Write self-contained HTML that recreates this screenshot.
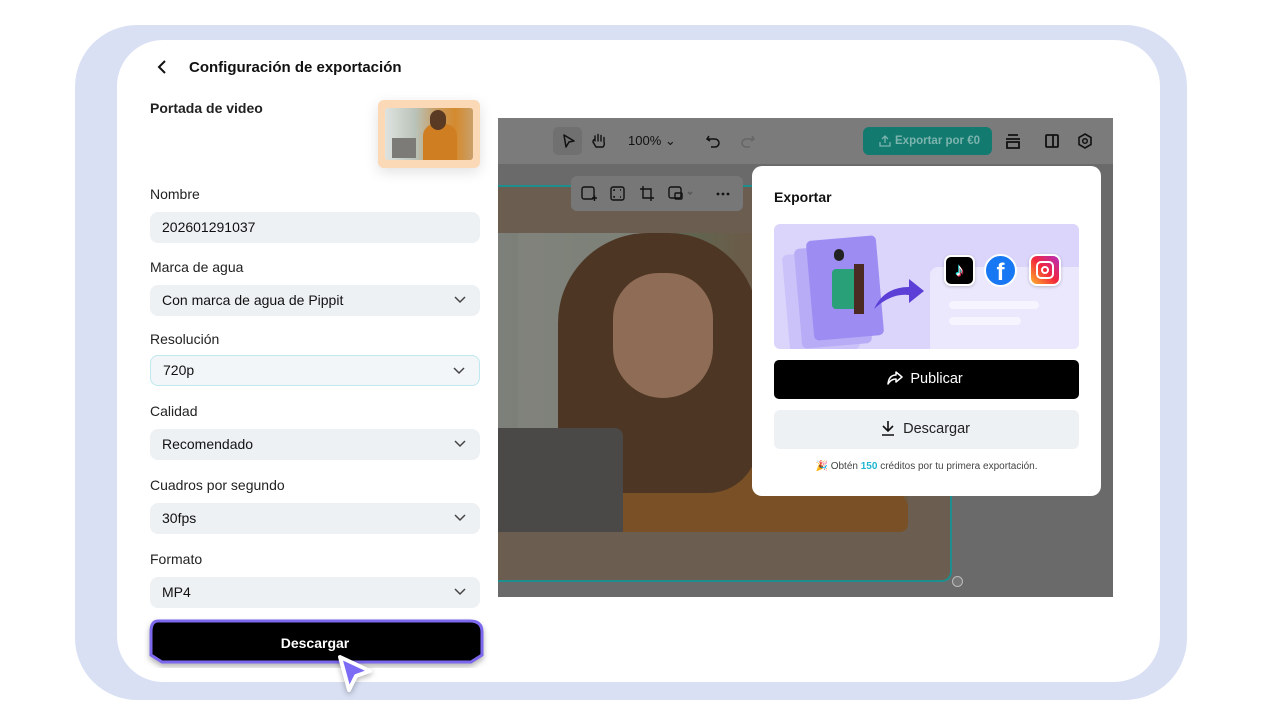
<!DOCTYPE html>
<html><head><meta charset="utf-8"><style>
*{box-sizing:border-box;margin:0;padding:0}
body{width:1280px;height:720px;background:#fff;font-family:"Liberation Sans",sans-serif;position:relative;overflow:hidden;color:#111}
.abs{position:absolute}
.outer{left:75px;top:25px;width:1112px;height:675px;background:#d9e0f4;border-radius:62px}
.inner{left:117px;top:40px;width:1043px;height:642px;background:#fff;border-radius:46px}
.lbl{position:absolute;left:150px;font-size:14px;color:#222}
.fld{position:absolute;left:150px;width:330px;height:31px;background:#eef1f4;border-radius:8px;font-size:14px;padding-left:12px;line-height:31px;color:#111}
.fld svg{position:absolute;right:14px;top:11px}
</style></head><body>
<div class="abs outer"></div>
<div class="abs inner"></div>

<svg class="abs" style="left:156px;top:59px" width="14" height="16"><path d="M9 2 L3 8 L9 14" stroke="#111" stroke-width="2" fill="none"/></svg>
<div class="abs" style="left:189px;top:59px;font-size:15px;font-weight:bold">Configuración de exportación</div>
<div class="abs" style="left:150px;top:100px;font-size:14px;font-weight:bold;color:#222">Portada de video</div>
<div class="abs" style="left:378px;top:100px;width:102px;height:68px;background:#fbd9b6;border-radius:6px;box-shadow:0 4px 14px rgba(0,0,0,.12);overflow:hidden">
 <div class="abs" style="left:7px;top:8px;width:88px;height:52px;border-radius:3px;background:linear-gradient(90deg,#dfe3e0 0%,#b9c2b8 35%,#c99a5c 60%,#d48a2e 80%,#c9a06a 100%)"></div>
 <div class="abs" style="left:45px;top:24px;width:34px;height:36px;background:#cf7e22;border-radius:12px 12px 0 0"></div>
 <div class="abs" style="left:52px;top:10px;width:16px;height:20px;background:#5a3a22;border-radius:8px"></div>
 <div class="abs" style="left:14px;top:38px;width:24px;height:20px;background:#7d7b78"></div>
</div>

<div class="lbl" style="top:186px">Nombre</div>
<div class="fld" style="top:212px">202601291037</div>
<div class="lbl" style="top:259px">Marca de agua</div>
<div class="fld" style="top:285px">Con marca de agua de Pippit<svg width="12" height="8"><path d="M1 1l5 5 5-5" stroke="#444" stroke-width="1.5" fill="none"/></svg></div>
<div class="lbl" style="top:331px">Resolución</div>
<div class="fld" style="top:355px;background:#f2f6f8;border:1px solid #bfe8ef;line-height:29px">720p<svg width="12" height="8"><path d="M1 1l5 5 5-5" stroke="#444" stroke-width="1.5" fill="none"/></svg></div>
<div class="lbl" style="top:403px">Calidad</div>
<div class="fld" style="top:429px">Recomendado<svg width="12" height="8"><path d="M1 1l5 5 5-5" stroke="#444" stroke-width="1.5" fill="none"/></svg></div>
<div class="lbl" style="top:477px">Cuadros por segundo</div>
<div class="fld" style="top:503px">30fps<svg width="12" height="8"><path d="M1 1l5 5 5-5" stroke="#444" stroke-width="1.5" fill="none"/></svg></div>
<div class="lbl" style="top:551px">Formato</div>
<div class="fld" style="top:577px">MP4<svg width="12" height="8"><path d="M1 1l5 5 5-5" stroke="#444" stroke-width="1.5" fill="none"/></svg></div>

<svg class="abs" style="left:144px;top:618px" width="346" height="50"><path d="M14 3 H326 Q338 3 338 14 V37 L327 44 H18 L7 37 V14 Q7 3 14 3 Z" fill="#000" stroke="#7b68ee" stroke-width="3" filter="drop-shadow(0 3px 3px rgba(0,0,0,.3))"/></svg>
<div class="abs" style="left:150px;top:635px;width:330px;text-align:center;color:#fff;font-size:14px;font-weight:bold">Descargar</div>
<svg class="abs" style="left:330px;top:650px" width="50" height="50"><path d="M10 7 L40 21 L26 26 L19 40 Z" fill="#7c6cf5" stroke="#fff" stroke-width="4" stroke-linejoin="round" filter="drop-shadow(0 2px 3px rgba(0,0,0,.3))"/></svg>

<!-- canvas -->
<div class="abs" style="left:498px;top:118px;width:615px;height:479px;background:#6a6a6a"></div>
<div class="abs" style="left:498px;top:118px;width:615px;height:46px;background:#7b7b7b"></div>
<div class="abs" style="left:498px;top:185px;width:454px;height:397px;background:#6b5e51;border-top:2px solid #1e8e8e;border-bottom:2px solid #1e8e8e;border-right:2px solid #1e8e8e;border-radius:0 0 10px 0"></div>
<div class="abs" style="left:498px;top:233px;width:410px;height:299px;border-radius:0 0 8px 0;overflow:hidden;background:linear-gradient(90deg,#7d807a 0%,#737a6c 30%,#5f6652 45%,#6a5c48 60%,#6d5a42 100%)">
 <div class="abs" style="left:20px;top:0;width:130px;height:200px;background:#84867f;opacity:.6"></div>
 <div class="abs" style="left:60px;top:150px;width:90px;height:130px;background:#4e5a40;border-radius:50%;opacity:.7"></div>
 <div class="abs" style="left:60px;top:200px;width:360px;height:160px;background:#7a5126;border-radius:90px 120px 0 0"></div>
 <div class="abs" style="left:60px;top:0px;width:200px;height:260px;background:#4d3624;border-radius:90px 90px 50px 50px"></div>
 <div class="abs" style="left:115px;top:40px;width:100px;height:125px;background:#8e6c55;border-radius:50px 50px 55px 55px"></div>
 <div class="abs" style="left:0;top:195px;width:125px;height:104px;background:#4a4947;border-radius:0 8px 0 0"></div>
</div>
<div class="abs" style="left:952px;top:576px;width:11px;height:11px;border-radius:50%;background:#777;border:1px solid #bbb"></div>

<!-- top toolbar -->
<div class="abs" style="left:553px;top:127px;width:29px;height:28px;background:#707070;border-radius:5px"></div>
<svg class="abs" style="left:561px;top:133px" width="16" height="16"><path d="M3 2 L13 8 L8 9 L5 14 Z" fill="none" stroke="#111" stroke-width="1.5" stroke-linejoin="round"/></svg>
<svg class="abs" style="left:590px;top:132px" width="18" height="18"><path d="M5 9 V4 M8 9 V2.5 M11 9 V3.5 M14 10 V5.5 M5 8 Q3 7 3 10 L6 15 H13 Q15 13 14 10" fill="none" stroke="#111" stroke-width="1.4" stroke-linecap="round"/></svg>
<div class="abs" style="left:628px;top:133px;font-size:13px;color:#111">100% ⌄</div>
<svg class="abs" style="left:705px;top:133px" width="16" height="16"><path d="M4 3 L2 6 L5 8 M2 6 H10 A4 4 0 0 1 10 14 H6" fill="none" stroke="#111" stroke-width="1.5"/></svg>
<svg class="abs" style="left:740px;top:133px" width="16" height="16"><path d="M12 3 L14 6 L11 8 M14 6 H6 A4 4 0 0 0 6 14 H10" fill="none" stroke="#666" stroke-width="1.5"/></svg>
<div class="abs" style="left:863px;top:127px;width:129px;height:28px;background:#137a70;border-radius:6px;color:#7cb4ae;font-size:11.5px;font-weight:bold;line-height:28px;padding-left:32px">Exportar por €0</div>
<svg class="abs" style="left:878px;top:134px" width="14" height="14"><path d="M7 9 V2 M4 5 L7 2 L10 5 M2 8 V12 H12 V8" fill="none" stroke="#7cb4ae" stroke-width="1.3"/></svg>
<svg class="abs" style="left:1004px;top:132px" width="18" height="18"><path d="M4 3 H14 M2 7 H16 M3 10 H15 V16 H3 Z" fill="none" stroke="#111" stroke-width="1.8"/></svg>
<svg class="abs" style="left:1044px;top:133px" width="16" height="16"><rect x="2" y="2" width="12" height="12" rx="1" fill="none" stroke="#111" stroke-width="1.8"/><path d="M9 2 V14" stroke="#111" stroke-width="1.8"/></svg>
<svg class="abs" style="left:1076px;top:132px" width="18" height="18"><path d="M9 2 L15 5.5 V12.5 L9 16 L3 12.5 V5.5 Z" fill="none" stroke="#111" stroke-width="1.6"/><circle cx="9" cy="9" r="2.3" fill="none" stroke="#111" stroke-width="1.5"/></svg>

<!-- floating toolbar -->
<div class="abs" style="left:571px;top:176px;width:172px;height:35px;background:#777;border-radius:6px"></div>
<svg class="abs" style="left:580px;top:185px" width="160" height="18">
 <g fill="none" stroke="#111" stroke-width="1.4"><rect x="2" y="2" width="12" height="12" rx="2"/><path d="M12 13 H17 M14.5 10.5 V16"/>
 <rect x="31" y="2" width="13" height="13" rx="2"/><path d="M34 6 V5 H35 M41 5 H40 M41 12 H40 M34 11 V12 H35"/>
 <path d="M63 1 V13 H74 M60 4 H71 V16"/>
 <rect x="89" y="2" width="12" height="11" rx="2"/><rect x="95" y="8" width="7" height="6" rx="1"/>
 <path d="M108 7 L110 9 L112 7" stroke="#555"/></g>
 <circle cx="138" cy="9" r="1.4" fill="#111"/><circle cx="143" cy="9" r="1.4" fill="#111"/><circle cx="148" cy="9" r="1.4" fill="#111"/>
</svg>

<!-- export popup -->
<div class="abs" style="left:752px;top:166px;width:349px;height:330px;background:#fff;border-radius:10px"></div>
<div class="abs" style="left:774px;top:189px;font-size:14px;font-weight:bold">Exportar</div>
<div class="abs" style="left:774px;top:224px;width:305px;height:125px;background:#dcd5fb;border-radius:6px;overflow:hidden">
 <div class="abs" style="left:156px;top:43px;width:160px;height:90px;background:#ebe7fd;border-radius:8px"></div>
 <div class="abs" style="left:175px;top:77px;width:90px;height:8px;background:#f6f4ff;border-radius:4px"></div>
 <div class="abs" style="left:175px;top:93px;width:72px;height:8px;background:#f6f4ff;border-radius:4px"></div>
 <div class="abs" style="left:12px;top:28px;width:70px;height:100px;background:#cbc2f9;border-radius:5px;transform:rotate(-5deg)"></div>
 <div class="abs" style="left:24px;top:22px;width:70px;height:100px;background:#b8acf6;border-radius:5px;transform:rotate(-5deg)"></div>
 <div class="abs" style="left:36px;top:14px;width:70px;height:100px;background:#9d8df3;border-radius:5px;transform:rotate(-5deg)"></div>
 <div class="abs" style="left:58px;top:45px;width:28px;height:40px;background:#2aa079;border-radius:4px"></div>
 <div class="abs" style="left:80px;top:40px;width:10px;height:50px;background:#4a2a22"></div>
 <div class="abs" style="left:60px;top:25px;width:10px;height:12px;background:#222;border-radius:5px"></div>
 <svg class="abs" style="left:95px;top:45px" width="60" height="45"><path d="M5 40 Q15 18 40 18 V10 L55 22 L40 34 V26 Q22 24 5 40Z" fill="#5b3fd6"/></svg>
</div>
<div class="abs" style="left:944px;top:255px;width:31px;height:31px;background:#000;border-radius:7px;border:2px solid #fff;box-shadow:0 1px 3px rgba(0,0,0,.2);color:#fff;font-size:18px;font-weight:bold;text-align:center;line-height:27px;text-shadow:-1px -1px #25f4ee,1px 1px #fe2c55">♪</div>
<div class="abs" style="left:984px;top:254px;width:33px;height:33px;background:#1877f2;border-radius:50%;border:2px solid #fff;color:#fff;font-size:24px;font-weight:bold;text-align:center;line-height:34px;overflow:hidden">f</div>
<div class="abs" style="left:1029px;top:254px;width:32px;height:32px;background:linear-gradient(45deg,#fdb12a,#f3263b 50%,#b52dc1);border-radius:8px;border:2px solid #fff;box-shadow:0 1px 3px rgba(0,0,0,.2)"><div style="margin:5px;width:18px;height:18px;border:2px solid #fff;border-radius:5px;position:relative"><div style="position:absolute;left:3px;top:3px;width:8px;height:8px;border:2px solid #fff;border-radius:50%"></div></div></div>

<div class="abs" style="left:774px;top:360px;width:305px;height:39px;background:#000;border-radius:5px;color:#fff;font-size:14.5px;text-align:center;line-height:39px">&nbsp;&nbsp;&nbsp;&nbsp;&nbsp;Publicar</div>
<svg class="abs" style="left:886px;top:370px" width="18" height="16"><path d="M10 2 L16 7 L10 12 V9 Q5 9 2 14 Q3 5 10 5 Z" fill="none" stroke="#fff" stroke-width="1.5" stroke-linejoin="round"/></svg>
<div class="abs" style="left:774px;top:410px;width:305px;height:39px;background:#eef1f4;border-radius:6px;font-size:14.5px;text-align:center;line-height:39px;color:#222">&nbsp;&nbsp;&nbsp;&nbsp;&nbsp;Descargar</div>
<svg class="abs" style="left:880px;top:420px" width="16" height="17"><path d="M8 1 V11 M3 6 L8 11 L13 6 M2 15 H14" fill="none" stroke="#111" stroke-width="1.6"/></svg>
<div class="abs" style="left:752px;top:461px;width:349px;text-align:center;font-size:10px;color:#444">🎉 Obtén <b style="color:#1fb6d2">150</b> créditos por tu primera exportación.</div>
</body></html>
